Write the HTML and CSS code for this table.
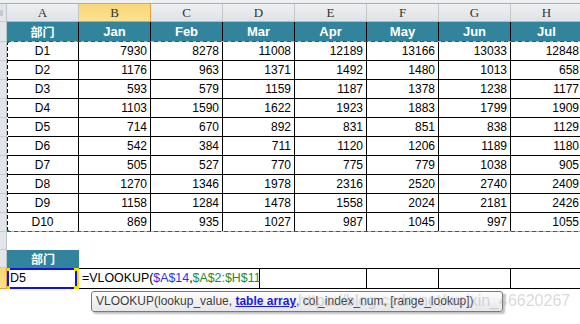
FILE: index.html
```html
<!DOCTYPE html>
<html lang="zh">
<head>
<meta charset="utf-8">
<title>VLOOKUP</title>
<link rel="stylesheet" href="styles.css">
</head>
<body>
<div class="sheet">
  <div class="topbar"></div>
  <div class="row colhead">
    <div class="rh corner"><span class="tri"></span></div>
    <div class="ch">A</div><div class="ch sel">B</div><div class="ch">C</div><div class="ch">D</div>
    <div class="ch">E</div><div class="ch">F</div><div class="ch">G</div><div class="ch">H</div>
  </div>
  <div class="table">
    <div class="row thead">
      <div class="rh"></div>
      <div class="th cjk">部门</div><div class="th">Jan</div><div class="th">Feb</div><div class="th">Mar</div>
      <div class="th">Apr</div><div class="th">May</div><div class="th">Jun</div><div class="th">Jul</div>
    </div>
    <div class="row data"><div class="rh"></div><div class="d name">D1</div><div class="d">7930</div><div class="d">8278</div><div class="d">11008</div><div class="d">12189</div><div class="d">13166</div><div class="d">13033</div><div class="d">12848</div></div>
    <div class="row data"><div class="rh"></div><div class="d name">D2</div><div class="d">1176</div><div class="d">963</div><div class="d">1371</div><div class="d">1492</div><div class="d">1480</div><div class="d">1013</div><div class="d">658</div></div>
    <div class="row data"><div class="rh"></div><div class="d name">D3</div><div class="d">593</div><div class="d">579</div><div class="d">1159</div><div class="d">1187</div><div class="d">1378</div><div class="d">1238</div><div class="d">1177</div></div>
    <div class="row data"><div class="rh"></div><div class="d name">D4</div><div class="d">1103</div><div class="d">1590</div><div class="d">1622</div><div class="d">1923</div><div class="d">1883</div><div class="d">1799</div><div class="d">1909</div></div>
    <div class="row data"><div class="rh"></div><div class="d name">D5</div><div class="d">714</div><div class="d">670</div><div class="d">892</div><div class="d">831</div><div class="d">851</div><div class="d">838</div><div class="d">1129</div></div>
    <div class="row data"><div class="rh"></div><div class="d name">D6</div><div class="d">542</div><div class="d">384</div><div class="d">711</div><div class="d">1120</div><div class="d">1206</div><div class="d">1189</div><div class="d">1180</div></div>
    <div class="row data"><div class="rh"></div><div class="d name">D7</div><div class="d">505</div><div class="d">527</div><div class="d">770</div><div class="d">775</div><div class="d">779</div><div class="d">1038</div><div class="d">905</div></div>
    <div class="row data"><div class="rh"></div><div class="d name">D8</div><div class="d">1270</div><div class="d">1346</div><div class="d">1978</div><div class="d">2316</div><div class="d">2520</div><div class="d">2740</div><div class="d">2409</div></div>
    <div class="row data"><div class="rh"></div><div class="d name">D9</div><div class="d">1158</div><div class="d">1284</div><div class="d">1478</div><div class="d">1558</div><div class="d">2024</div><div class="d">2181</div><div class="d">2426</div></div>
    <div class="row data"><div class="rh"></div><div class="d name">D10</div><div class="d">869</div><div class="d">935</div><div class="d">1027</div><div class="d">987</div><div class="d">1045</div><div class="d">997</div><div class="d">1055</div></div>
    <div class="ants"></div>
  </div>
  <div class="row empty"><div class="rh"></div></div>
  <div class="row thead2"><div class="rh"></div><div class="th2 cjk">部门</div></div>
  <div class="row input">
    <div class="rh hl"></div>
    <div class="acell">
      <div class="selbox">D5<span class="hd tl"></span><span class="hd tr"></span><span class="hd bl"></span><span class="hd br"></span></div>
      <div class="ystrip"></div>
    </div>
    <div class="editor">=VLOOKUP(<span class="ref1">$A$14</span>,<span class="ref2">$A$2:$H$11</span></div>
    <div class="ic wide"></div><div class="ic"></div><div class="ic"></div><div class="ic"></div>
  </div>
  <div class="tip">VLOOKUP(lookup_value, <span class="cur">table array</span>, col_index_num, [range_lookup])</div>
  <div class="wm">https://blog.csdn.net/weixin_46620267</div>
</div>
</body>
</html>
```
FILE: styles.css
```css
* { box-sizing: border-box; }
html, body { margin: 0; padding: 0; }
body {
  width: 580px;
  height: 324px;
  overflow: hidden;
  background: #fff;
  font-family: "Liberation Sans", Arial, sans-serif;
  font-size: 12px;
  color: #000;
}
.sheet { position: relative; width: 580px; height: 324px; overflow: hidden; }
.cjk { font-family: "Noto Sans CJK SC", "Liberation Sans", sans-serif; }

.topbar { height: 4px; background: #eef0f2; border-bottom: 1px solid #a9aeb5; }

.row { display: flex; width: max-content; }
.rh {
  width: 7px; flex: none;
  background: #e2e5e9;
  border-right: 1px solid #bcc2c9;
  border-bottom: 1px solid #c9ced4;
}
.rh.hl { background: linear-gradient(#f8d57a, #fde08e); border-right-color: #e0a23c; border-bottom-color: #e0a23c; }

.colhead { height: 18px; }
.corner { position: relative; }
.tri { position: absolute; left: 0; top: 6px; width: 3px; height: 6px; background: #c5c9ce; }
.ch {
  width: 72px; flex: none; height: 18px;
  background: linear-gradient(#eef0f2, #dfe2e6);
  border-right: 1px solid #c3c8cf;
  border-bottom: 1px solid #b3b9c1;
  font-family: "Liberation Serif", serif;
  font-size: 13px; color: #333;
  text-align: center; line-height: 17px;
}
.ch.sel { background: linear-gradient(#f8d57a, #fde290); border-right-color: #e0a23c; border-bottom-color: #e0a23c; }

.table { position: relative; }
.thead { height: 20px; }
.th {
  width: 72px; flex: none; height: 20px;
  background: #31849b; color: #fff;
  font-weight: bold; font-size: 13px;
  border-right: 1px solid #000;
  border-bottom: 1px solid #000;
  text-align: center; line-height: 19px;
}
.th.cjk { font-size: 12px; }
.data { height: 19px; }
.d {
  width: 72px; flex: none; height: 19px;
  border-right: 1px solid #000;
  border-bottom: 1px solid #000;
  text-align: right; padding-right: 3px;
  line-height: 18px;
}
.d.name { text-align: center; padding-right: 0; }

.ants {
  position: absolute; left: 7px; top: 19px; width: 580px; height: 191px;
  background:
    repeating-linear-gradient(90deg, #2c6b2c 0 4px, #d89ad8 4px 7px) top left / 100% 1px no-repeat,
    repeating-linear-gradient(90deg, #2c6b2c 0 4px, #d89ad8 4px 7px) bottom left / 100% 1px no-repeat,
    repeating-linear-gradient(180deg, #111 0 4px, #fff 4px 6px) top left / 1px 100% no-repeat;
}
.ants::before, .ants::after { content: ""; position: absolute; left: 0; width: 2px; height: 2px; background: #1f7a1f; }
.ants::before { top: 0; }
.ants::after { bottom: 0; }

.empty { height: 18px; }
.empty .rh { height: 18px; }
.thead2 { height: 18px; }
.th2 {
  width: 72px; flex: none; height: 18px;
  background: #31849b; color: #fff; font-weight: bold; font-size: 12px;
  text-align: center; line-height: 18px;
}

.input { height: 21px; }
.acell { width: 72px; flex: none; display: flex; }
.selbox {
  position: relative; width: 70px; height: 21px;
  border: 2px solid #1010f0;
  padding-left: 1px; line-height: 17px; font-size: 12.5px;
}
.hd { position: absolute; width: 3px; height: 3px; background: #f0e000; }
.hd.tl { left: -2px; top: -2px; }
.hd.tr { right: -2px; top: -2px; }
.hd.bl { left: -2px; bottom: -2px; }
.hd.br { right: -2px; bottom: -2px; }
.ystrip { width: 2px; height: 21px; background: #f2e600; }
.editor {
  width: 181px; flex: none; height: 21px;
  border-top: 1px solid #000; border-bottom: 1px solid #000; border-right: 1px solid #000;
  padding-left: 3px; line-height: 19px; white-space: nowrap;
  font-size: 12.4px;
}
.ref1 { color: #2f2ff0; }
.ref2 { color: #2a8a1a; }
.ic {
  width: 72px; flex: none; height: 21px;
  border-top: 1px solid #000; border-bottom: 1px solid #000; border-right: 1px solid #000;
}
.ic.wide { width: 107px; }

.tip {
  margin: 2px 0 0 91px;
  width: 412px; height: 21px;
  border: 1px solid #7a7a7a; border-radius: 3px;
  background: linear-gradient(#fdfdfd, #e7e7eb);
  box-shadow: 2px 2px 2px rgba(0, 0, 0, 0.25);
  padding-left: 4px;
  line-height: 19px; white-space: nowrap;
  color: #3d3d3d; font-size: 12px;
}
.cur { color: #1a1ae6; font-weight: bold; text-decoration: underline; }

.wm {
  position: absolute; left: 298px; top: 291px;
  font-size: 16px; line-height: 20px;
  color: rgba(170, 170, 170, 0.45);
  white-space: nowrap;
}
```
